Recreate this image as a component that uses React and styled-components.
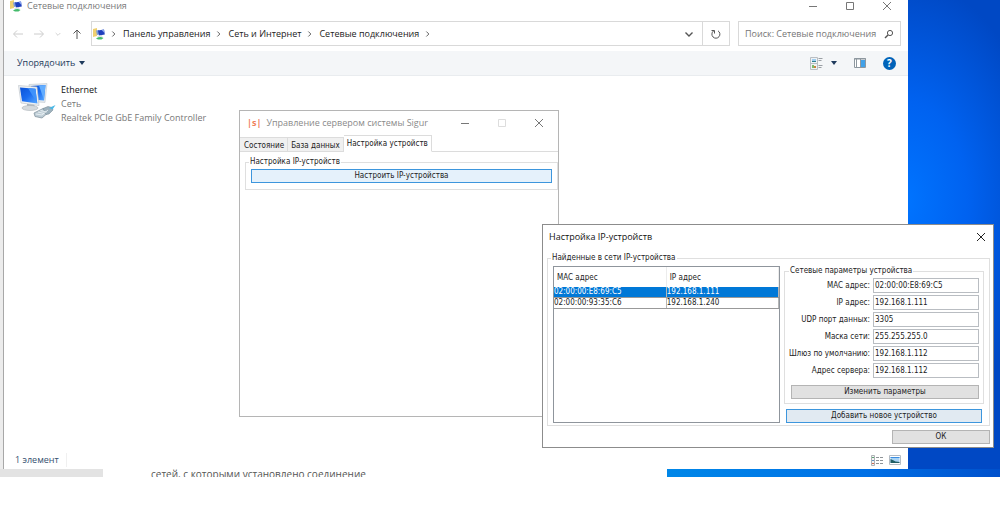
import React from "react";
import styled, { createGlobalStyle } from "styled-components";

const GlobalStyle = createGlobalStyle`
  * {
    box-sizing: border-box;
  }
  body {
    margin: 0;
    background: #fff;
    font-family: "Open Sans", sans-serif;
    font-size: 9px;
    line-height: 14px;
    color: #222;
  }
  button, input {
    font: inherit;
    color: inherit;
  }
`;

const Desktop = styled.div`
  position: relative;
  overflow: hidden;
  padding: 0 92px 0 3px;
  background:
    linear-gradient(#ececec, #ececec) 0 0 / 3px 100% no-repeat,
    radial-gradient(ellipse 140px 220px at 905px 200px, #0074ff, #0062f0 45%, #0048c4);
`;

const PlainButton = styled.button`
  display: inline-flex;
  align-items: center;
  justify-content: center;
  padding: 0;
  border: 0;
  background: none;
`;

/* Explorer window */
const Explorer = styled.section`
  display: flex;
  flex-direction: column;
  background: #fff;
  border-left: 1px solid #a8a8a8;
`;
const TitleBar = styled.header`
  display: flex;
  align-items: center;
  gap: 5px;
  height: 12px;
  padding: 0 15px 0 6px;
  color: #7a7a7a;
`;
const WindowTitle = styled.h1`
  flex: 1;
  margin: 0;
  font-size: 9px;
  font-weight: 400;
`;
const WindowButtons = styled.div`
  display: flex;
  gap: 25px;
`;
const NavBar = styled.nav`
  display: flex;
  align-items: center;
  gap: 8px;
  padding: 9px 7px 5px 8px;
`;
const NavButtons = styled.div`
  display: flex;
  align-items: center;
  gap: 9px;
`;
const AddressBar = styled.div`
  flex: 1;
  display: flex;
  align-items: stretch;
  height: 25px;
  border: 1px solid #d9d9d9;
`;
const Crumbs = styled.div`
  flex: 1;
  display: flex;
  align-items: center;
  gap: 4px;
  padding-left: 1px;
  a {
    color: #222;
    text-decoration: none;
  }
`;
const AddressButton = styled(PlainButton)`
  width: 27px;
  border-left: ${(props) => (props.$divided ? "1px solid #d9d9d9" : "0")};
`;
const SearchBox = styled.label`
  display: flex;
  align-items: center;
  width: 163px;
  height: 25px;
  padding: 0 6px;
  border: 1px solid #d9d9d9;
  input {
    flex: 1;
    min-width: 0;
    padding: 0;
    border: 0;
    outline: 0;
  }
  input::placeholder {
    color: #767676;
    opacity: 1;
  }
`;
const CommandBar = styled.div`
  display: flex;
  align-items: center;
  gap: 17px;
  height: 25px;
  padding: 0 12px 0 13px;
  background: #f4f6f8;
  border-bottom: 1px solid #e9ecef;
`;
const Organize = styled(PlainButton)`
  gap: 4px;
  margin-right: auto;
  color: #1e3a5c;
`;
const ViewSwitch = styled.div`
  display: flex;
  gap: 8px;
`;
const Connections = styled.ul`
  flex: 1;
  min-height: 375px;
  margin: 0;
  padding: 7px 14px;
  list-style: none;
`;
const Connection = styled.li`
  display: flex;
  gap: 5px;
  color: #777;
  p {
    margin: 0;
  }
  p:first-child {
    color: #111;
  }
`;
const StatusBar = styled.footer`
  display: flex;
  align-items: center;
  gap: 6px;
  height: 18px;
  padding: 0 7px 0 11px;
  color: #35506f;
  span {
    margin-right: auto;
    padding-right: 7px;
    border-right: 1px solid #f0f0f0;
  }
`;

const Backdrop = styled.div`
  display: grid;
  grid-template-columns: 103px 1fr 333px;
  height: 8px;
  margin: 0 -92px 0 -3px;
  overflow: hidden;
`;
const BackdropEdge = styled.div`
  background: #e3e3e3;
`;
const BackdropPage = styled.div`
  padding-left: 48px;
  background: #fff;
  color: #555;
  font-size: 10px;
  line-height: 10px;
`;
const BackdropGlow = styled.div`
  background: linear-gradient(90deg, #0087e8, #0070e6 60%, #0050cc);
`;

/* Windows lying over the explorer */
const FloatingWindow = styled.section`
  position: absolute;
  left: ${(props) => props.$left}px;
  top: ${(props) => props.$top}px;
  width: ${(props) => props.$width}px;
  display: flex;
  flex-direction: column;
  background: #fff;
  border: 1px solid ${(props) => props.$edge};
  font-family: "DejaVu Sans Condensed", "DejaVu Sans", sans-serif;
  font-size: 8px;
  line-height: 10px;
`;
const FloatingTitle = styled.header`
  display: flex;
  align-items: center;
  gap: 5px;
  height: 24px;
  padding: 0 ${(props) => props.$right}px 0 ${(props) => props.$left}px;
  color: ${(props) => props.$color};
  font-family: "Open Sans", sans-serif;
  line-height: 14px;
`;
const Tabs = styled.div`
  display: flex;
  align-items: flex-end;
  border-bottom: 1px solid #dcdcdc;
`;
const Tab = styled.button`
  height: ${(props) => (props.$active ? 17 : 15)}px;
  margin-bottom: -1px;
  padding: ${(props) => (props.$active ? "0 3px" : "2px 3px 0 4px")};
  border: 1px solid #dcdcdc;
  border-left: 0;
  border-bottom-color: ${(props) => (props.$active ? "#fff" : "#dcdcdc")};
  background: ${(props) => (props.$active ? "#fff" : "#f0f0f0")};
  & + & {
    padding-left: 3px;
  }
`;
const TabPanel = styled.div`
  min-height: 264px;
  padding: 5px 0 0 5px;
`;
const Group = styled.fieldset`
  min-width: 0;
  margin: 0;
  padding: ${(props) => props.$padding};
  border: 1px solid #dfdfdf;
  legend {
    margin-left: ${(props) => props.$legend || 0}px;
    padding: 0 1px;
  }
`;
const PushButton = styled.button`
  display: block;
  width: 100%;
  height: 14px;
  padding: 0;
  border: 1px solid ${(props) => (props.$focused ? "#3d96dd" : "#b4b4b4")};
  background: ${(props) => (props.$focused ? props.$fill || "#e1eaf2" : "#e1e1e1")};
`;
const DialogBody = styled.div`
  padding: 4px 3px 3px 4px;
`;
const Columns = styled.div`
  display: grid;
  grid-template-columns: minmax(0, 1fr) 200px;
  gap: 4px;
`;
const DeviceList = styled.div`
  border: 1px solid #8f959c;
`;
const DeviceTable = styled.table`
  width: 100%;
  table-layout: fixed;
  border-collapse: collapse;
  th, td {
    padding: 0;
    text-align: left;
    font-weight: 400;
    border-right: 1px solid #b5b5b5;
  }
  th {
    height: 20px;
    padding: 2px 0 0 3px;
    border-color: #ececec;
  }
  td {
    height: 10px;
    border-bottom: 1px solid #999;
  }
`;
const DeviceRow = styled.tr`
  background: ${(props) => (props.$selected ? "#0078d7" : "#fff")};
  color: ${(props) => (props.$selected ? "#fff" : "#222")};
`;
const Side = styled.div`
  display: flex;
  flex-direction: column;
  gap: 5px;
`;
const Fields = styled.div`
  display: grid;
  gap: 2px;
  margin-bottom: 7px;
`;
const Field = styled.label`
  display: grid;
  grid-template-columns: 1fr 106px;
  gap: 3px;
  align-items: center;
  text-align: right;
  white-space: nowrap;
  input {
    width: 100%;
    height: 15px;
    padding: 0 1px;
    border: 1px solid #b9bdc2;
  }
`;
const ButtonRow = styled.div`
  padding: ${(props) => props.$padding};
`;
const DialogFooter = styled.footer`
  display: grid;
  grid-template-columns: 98px;
  justify-content: end;
  padding-top: 4px;
`;

const DEVICES = [
  { mac: "02:00:00:E8:69:C5", ip: "192.168.1.111" },
  { mac: "02:00:00:93:35:C6", ip: "192.168.1.240" },
];
const PARAMS = [
  ["MAC адрес:", "02:00:00:E8:69:C5"],
  ["IP адрес:", "192.168.1.111"],
  ["UDP порт данных:", "3305"],
  ["Маска сети:", "255.255.255.0"],
  ["Шлюз по умолчанию:", "192.168.1.112"],
  ["Адрес сервера:", "192.168.1.112"],
];
const CRUMBS = ["Панель управления", "Сеть и Интернет", "Сетевые подключения"];

const STROKES = {
  minimize: "M2 6.500h8",
  maximize: "M2.500 2.500h7v7h-7z",
  close: "M2 2l8 8M10 2l-8 8",
  back: "M11 6H2M5 2.500L1.500 6L5 9.500",
  forward: "M1 6h9M7 2.500L10.500 6L7 9.500",
  up: "M6 11V2M2.500 5.500L6 2L9.500 5.500",
  chevron: "M4 3L7 6L4 9",
  down: "M2.500 4.500L6 8L9.500 4.500",
  refresh: "M3.500 3A4 4 0 1 0 8 2.800M1.500 2.500h3v3",
};

function Stroke({ name, color = "#777", size = 12, weight = 1 }) {
  return (
    <svg width={size} height={size} viewBox="0 0 12 12" fill="none" stroke={color} strokeWidth={weight} aria-hidden="true">
      <path d={STROKES[name]} />
    </svg>
  );
}

function NetworkIcon() {
  return (
    <svg width="12" height="12" viewBox="0 0 12 12" aria-hidden="true">
      <path d="M0 1l4-1v8l-4 1z" fill="#efd070" />
      <path d="M3 2.500l3-.5v4.500l-2 .5z" fill="#7f9bd6" />
      <path d="M5 2.500l6-1 .8 5-5.800 1z" fill="#1f3fbd" />
      <path d="M8.500 2l2.500-.5.5 3.500z" fill="#8aa5ec" />
      <path d="M4 8l5-.8.5 1.300H5z" fill="#c4ccd6" />
      <path d="M3 10.500q4-2.500 7.500-.5l-2 1.500H5z" fill="#45bb6c" />
    </svg>
  );
}

function EthernetIcon() {
  return (
    <svg width="38" height="37" viewBox="0 0 38 37" aria-hidden="true">
      <defs>
        <linearGradient id="screen" x1="0" y1="0" x2="1" y2="1">
          <stop offset="0" stopColor="#0b52d6" />
          <stop offset="0.500" stopColor="#1a6cf0" />
          <stop offset="1" stopColor="#5aaaff" />
        </linearGradient>
      </defs>
      <path d="M11 1.500l18-1-2 19-15-1z" fill="#e4e9ed" stroke="#c3cad0" strokeWidth=".6" />
      <path d="M13 3l14.500-1L26 17.500l-12-1z" fill="url(#screen)" />
      <path d="M21 2.500l6.500-.5L26 17z" fill="#62adff" />
      <path d="M9 20l7 1 1 3H9z" fill="#aab3ba" />
      <ellipse cx="12" cy="25" rx="8" ry="2.500" fill="#d5dadd" stroke="#adb4b9" strokeWidth=".6" />
      <path d="M.5 2.500l18.500 1.500 2 18.500L3 20z" fill="#eef1f3" stroke="#b8c0c6" strokeWidth=".6" />
      <path d="M2 4.500l15.500 1.200L19.300 20.500 4 18.300z" fill="url(#screen)" />
      <path d="M10 5l7.500.7L19.300 20.500z" fill="#3f92fb" />
      <path d="M16 30l9-4.500 6 .5 1 2-8 7-7-1.500z" fill="#bccbd4" stroke="#7c8e99" strokeWidth=".7" />
      <path d="M25 25.500l5-2 4 1 1 2.500-4 4-3 .5z" fill="#9db1bd" stroke="#7c8e99" strokeWidth=".6" />
      <path d="M18 31l6 1 6-5M20 29l6 1.500M22.500 27.500l6 1.500" stroke="#f0f6f9" fill="none" strokeWidth=".8" />
      <path d="M31 25l6.500-3-3 4.500z" fill="#4ab8e6" />
    </svg>
  );
}

function Caret() {
  return (
    <svg width="6" height="4" viewBox="0 0 6 4" aria-hidden="true">
      <path d="M0 0h6L3 4z" fill="#1e3a5c" />
    </svg>
  );
}

function ViewIcon() {
  return (
    <svg width="13" height="13" viewBox="0 0 13 13" aria-hidden="true">
      <path d="M.5.5h7v12h-7zM.5 6.500h7" fill="#eef2f5" stroke="#b9bec3" />
      <path d="M2 2h4v3H2z" fill="#9fcdf0" />
      <path d="M2 4h4v1H2z" fill="#2f7f8f" />
      <path d="M2 8h2v3H2z" fill="#7dba6b" />
      <path d="M4 9h2v2H4z" fill="#c9803e" />
      <path d="M8.500 1.500h4M8.500 3.500h3M8.500 8.500h4M8.500 10.500h3" stroke="#9a9fa4" />
    </svg>
  );
}

function PaneIcon() {
  return (
    <svg width="12" height="10" viewBox="0 0 12 10" aria-hidden="true">
      <path d="M.5.5h11v9H.5z" fill="#fff" stroke="#8d979f" />
      <path d="M0 1h12M2.500 1v8M6.500 1v8" stroke="#8d979f" />
      <path d="M7 2h4v7H7z" fill="#41a1e8" />
    </svg>
  );
}

function DetailsIcon() {
  return (
    <svg width="12" height="11" viewBox="0 0 12 11" aria-hidden="true">
      <path d="M.5.5h3v10h-3z" fill="#f4f4f4" stroke="#aeb2b6" />
      <path d="M1 2h2v1H1z" fill="#58a36e" />
      <path d="M1 5h2v1H1z" fill="#6090c0" />
      <path d="M1 8h2v1H1z" fill="#cf6b52" />
      <path d="M5 2.500h3M9 2.500h3M5 5.500h3M9 5.500h3M5 8.500h3M9 8.500h3" stroke="#8f9498" />
    </svg>
  );
}

function ThumbnailIcon() {
  return (
    <svg width="12" height="10" viewBox="0 0 12 10" aria-hidden="true">
      <path d="M.5.5h11v9H.5z" fill="#fff" stroke="#b4bcc4" />
      <path d="M1.500 2h9v6h-9z" fill="#a8d3f5" />
      <path d="M1.500 2h9v1h-9z" fill="#3c8de0" />
      <path d="M1.500 4q3 1 5 2.500l4 .5v1h-9z" fill="#215f66" />
    </svg>
  );
}

function SearchIcon() {
  return (
    <svg width="10" height="10" viewBox="0 0 10 10" fill="none" stroke="#555" aria-hidden="true">
      <circle cx="6" cy="4" r="2.600" />
      <path d="M4 6L1 9" strokeWidth="1.400" />
    </svg>
  );
}

const HelpBadge = styled(PlainButton)`
  width: 13px;
  height: 13px;
  border-radius: 50%;
  background: #0063b9;
  color: #fff;
  font-size: 10px;
  font-weight: 700;
`;

const SigurMark = styled.span`
  color: #f07f5c;
  font-weight: 700;
  font-size: 9px;
`;

function ExplorerWindow() {
  return (
    <Explorer>
      <TitleBar>
        <NetworkIcon />
        <WindowTitle>Сетевые подключения</WindowTitle>
        <WindowButtons>
          <PlainButton aria-label="Свернуть"><Stroke name="minimize" /></PlainButton>
          <PlainButton aria-label="Развернуть"><Stroke name="maximize" /></PlainButton>
          <PlainButton aria-label="Закрыть"><Stroke name="close" /></PlainButton>
        </WindowButtons>
      </TitleBar>
      <NavBar>
        <NavButtons>
          <PlainButton aria-label="Назад"><Stroke name="back" color="#ccc" /></PlainButton>
          <PlainButton aria-label="Вперед"><Stroke name="forward" color="#ccc" /></PlainButton>
          <PlainButton aria-label="Недавние"><Stroke name="down" color="#bbb" size={8} /></PlainButton>
          <PlainButton aria-label="Вверх"><Stroke name="up" color="#555" /></PlainButton>
        </NavButtons>
        <AddressBar>
          <Crumbs>
            <NetworkIcon />
            {CRUMBS.map((crumb) => (
              <React.Fragment key={crumb}>
                <Stroke name="chevron" color="#444" size={10} />
                <a href="#">{crumb}</a>
              </React.Fragment>
            ))}
            <Stroke name="chevron" color="#444" size={10} />
          </Crumbs>
          <AddressButton aria-label="Журнал"><Stroke name="down" color="#555" weight={1.4} /></AddressButton>
          <AddressButton $divided aria-label="Обновить"><Stroke name="refresh" color="#555" /></AddressButton>
        </AddressBar>
        <SearchBox>
          <input type="text" aria-label="Поиск" placeholder="Поиск: Сетевые подключения" />
          <SearchIcon />
        </SearchBox>
      </NavBar>
      <CommandBar>
        <Organize>Упорядочить <Caret /></Organize>
        <ViewSwitch>
          <PlainButton aria-label="Вид"><ViewIcon /></PlainButton>
          <PlainButton aria-label="Другие виды"><Caret /></PlainButton>
        </ViewSwitch>
        <PlainButton aria-label="Область просмотра"><PaneIcon /></PlainButton>
        <HelpBadge aria-label="Справка">?</HelpBadge>
      </CommandBar>
      <Connections>
        <Connection>
          <EthernetIcon />
          <div>
            <p>Ethernet</p>
            <p>Сеть</p>
            <p>Realtek PCIe GbE Family Controller</p>
          </div>
        </Connection>
      </Connections>
      <StatusBar>
        <span>1 элемент</span>
        <PlainButton aria-label="Таблица"><DetailsIcon /></PlainButton>
        <PlainButton aria-label="Крупные значки"><ThumbnailIcon /></PlainButton>
      </StatusBar>
    </Explorer>
  );
}

function ServerWindow() {
  return (
    <FloatingWindow $left={239} $top={110} $width={320} $edge="#b5b5b5">
      <FloatingTitle $left={7} $right={13} $color="#8a8a8a">
        <SigurMark>|s|</SigurMark>
        <WindowTitle>Управление сервером системы Sigur</WindowTitle>
        <WindowButtons>
          <PlainButton aria-label="Свернуть"><Stroke name="minimize" /></PlainButton>
          <PlainButton aria-label="Развернуть"><Stroke name="maximize" color="#ddd" /></PlainButton>
          <PlainButton aria-label="Закрыть"><Stroke name="close" /></PlainButton>
        </WindowButtons>
      </FloatingTitle>
      <Tabs role="tablist">
        <Tab role="tab">Состояние</Tab>
        <Tab role="tab">База данных</Tab>
        <Tab role="tab" $active>Настройка устройств</Tab>
      </Tabs>
      <TabPanel>
        <Group $padding="2px 5px 6px 5px" $legend={-2}>
          <legend>Настройка IP-устройств</legend>
          <PushButton $focused $fill="#e5f1fb">Настроить IP-устройства</PushButton>
        </Group>
      </TabPanel>
    </FloatingWindow>
  );
}

function DeviceDialog() {
  return (
    <FloatingWindow $left={542} $top={224} $width={452} $edge="#8c8c8c">
      <FloatingTitle $left={6} $right={6} $color="#111">
        <WindowTitle>Настройка IP-устройств</WindowTitle>
        <PlainButton aria-label="Закрыть"><Stroke name="close" color="#222" /></PlainButton>
      </FloatingTitle>
      <DialogBody>
        <Group $padding="3px 5px 2px 5px" $legend={-2}>
          <legend>Найденные в сети IP-устройства</legend>
          <Columns>
            <DeviceList>
              <DeviceTable>
                <thead>
                  <tr>
                    <th>MAC адрес</th>
                    <th>IP адрес</th>
                  </tr>
                </thead>
                <tbody>
                  {DEVICES.map((device, index) => (
                    <DeviceRow key={device.mac} $selected={index === 0}>
                      <td>{device.mac}</td>
                      <td>{device.ip}</td>
                    </DeviceRow>
                  ))}
                </tbody>
              </DeviceTable>
            </DeviceList>
            <Side>
              <Group $padding="2px 4px 4px 1px" $legend={3}>
                <legend>Сетевые параметры устройства</legend>
                <Fields>
                  {PARAMS.map(([label, value]) => (
                    <Field key={label}>
                      {label}
                      <input type="text" defaultValue={value} />
                    </Field>
                  ))}
                </Fields>
                <ButtonRow $padding="0 0 0 5px">
                  <PushButton>Изменить параметры</PushButton>
                </ButtonRow>
              </Group>
              <ButtonRow $padding="0 2px">
                <PushButton $focused>Добавить новое устройство</PushButton>
              </ButtonRow>
            </Side>
          </Columns>
        </Group>
        <DialogFooter>
          <PushButton>ОК</PushButton>
        </DialogFooter>
      </DialogBody>
    </FloatingWindow>
  );
}

function App() {
  return (
    <>
      <GlobalStyle />
      <Desktop>
        <ExplorerWindow />
        <Backdrop>
          <BackdropEdge />
          <BackdropPage>сетей, с которыми установлено соединение</BackdropPage>
          <BackdropGlow />
        </Backdrop>
        <ServerWindow />
        <DeviceDialog />
      </Desktop>
    </>
  );
}

export default App;
